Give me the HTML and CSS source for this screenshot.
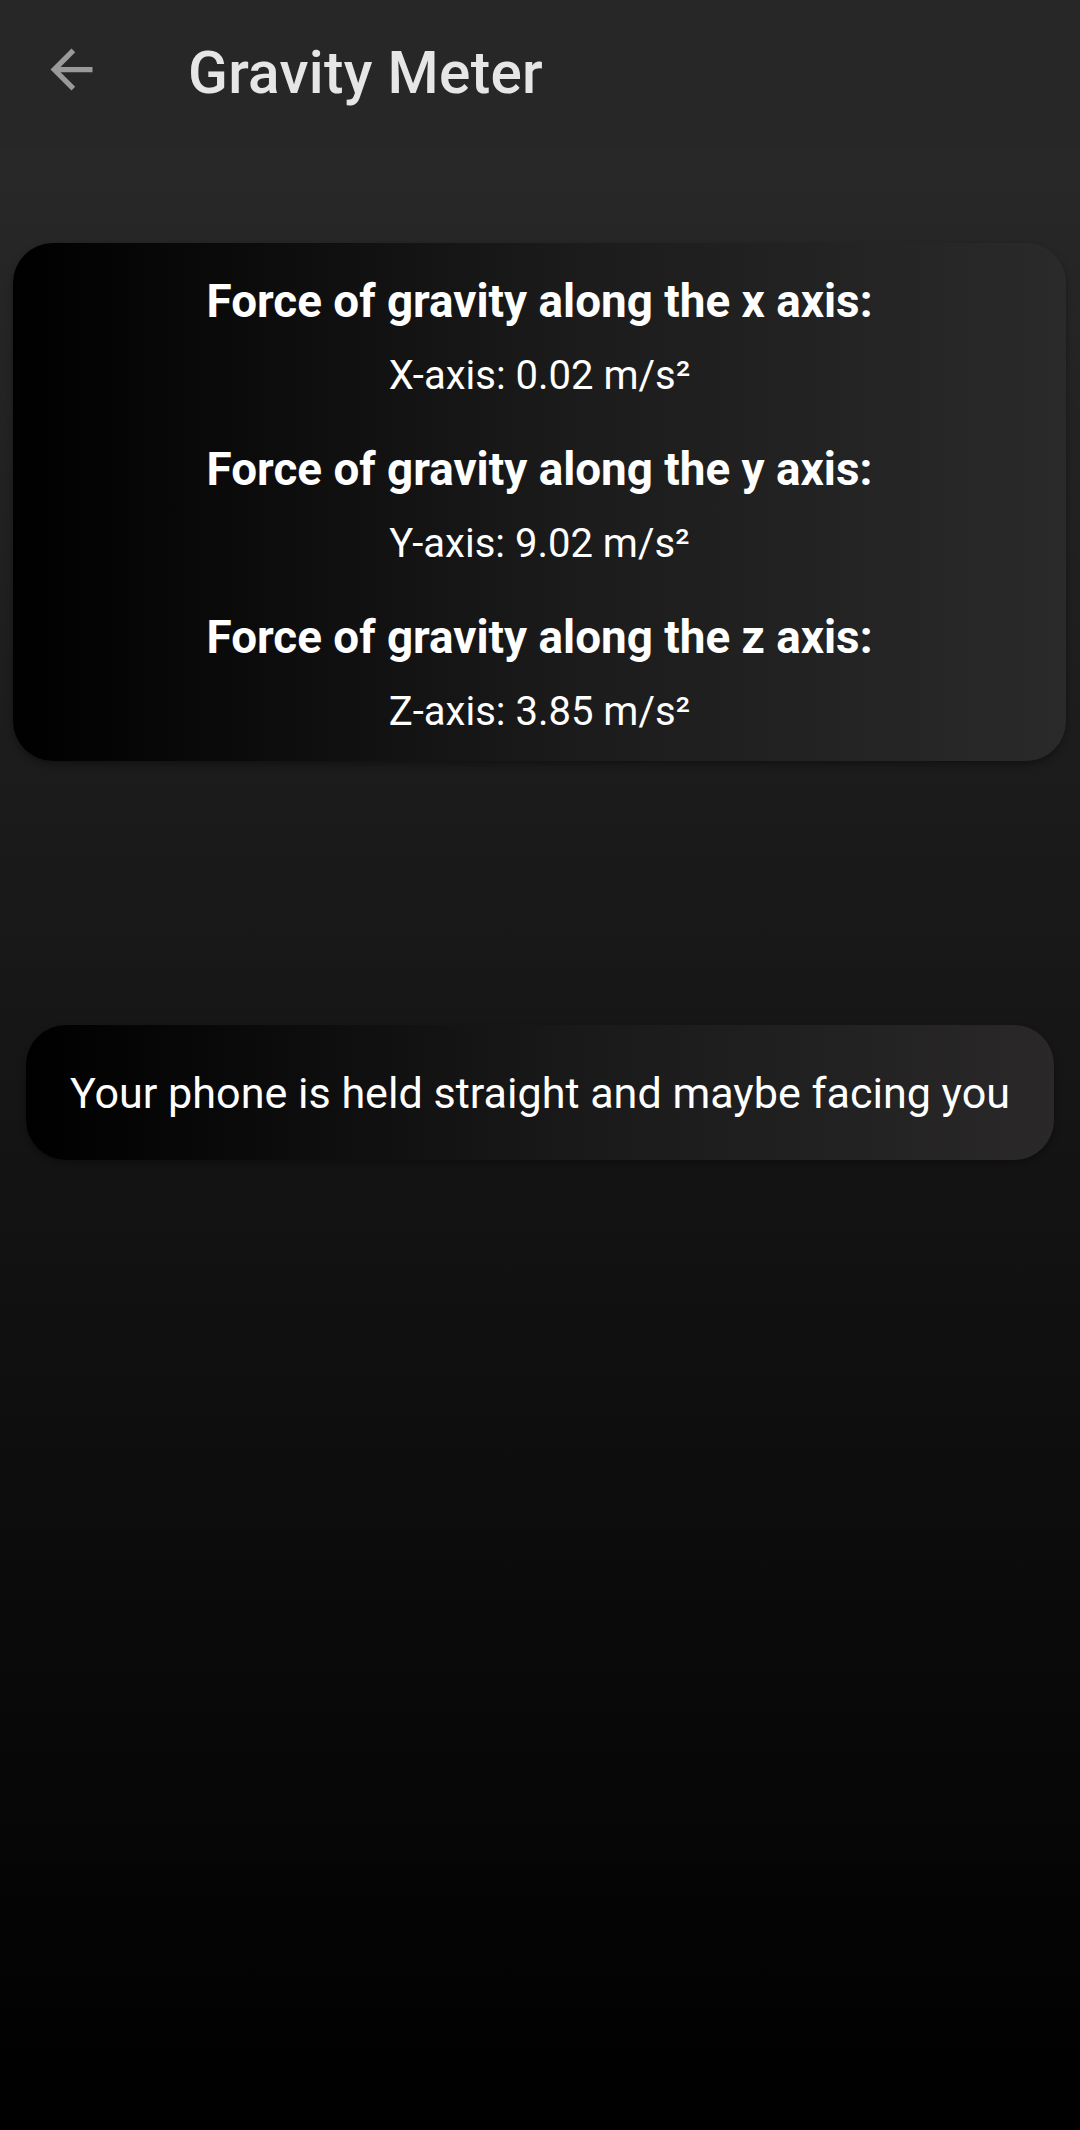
FILE: index.html
```html
<!DOCTYPE html>
<html>
<head>
<meta charset="utf-8">
<link rel="stylesheet" href="styles.css">
</head>
<body>
<div class="screen">
  <header class="appbar">
    <svg class="back" viewBox="0 0 24 24" width="63" height="63"><path d="M20 11H7.83l5.59-5.59L12 4l-8 8 8 8 1.41-1.41L7.83 13H20v-2z" fill="#9a9a9a"/></svg>
    <h1 class="title">Gravity Meter</h1>
  </header>
  <section class="card">
    <div class="row">
      <div class="label">Force of gravity along the x axis:</div>
      <div class="value">X-axis: 0.02 m/s²</div>
    </div>
    <div class="row">
      <div class="label">Force of gravity along the y axis:</div>
      <div class="value">Y-axis: 9.02 m/s²</div>
    </div>
    <div class="row">
      <div class="label">Force of gravity along the z axis:</div>
      <div class="value">Z-axis: 3.85 m/s²</div>
    </div>
  </section>
  <div class="status">Your phone is held straight and maybe facing you</div>
</div>
</body>
</html>
```
FILE: styles.css
```css
html, body {
  margin: 0;
  padding: 0;
}
body {
  width: 1080px;
  height: 2130px;
  background: linear-gradient(180deg, #2b2b2b 0%, #000 100%);
  font-family: Roboto, "Noto Sans", sans-serif;
  overflow: hidden;
}
.screen {
  display: flex;
  flex-direction: column;
}
.appbar {
  height: 147px;
  background: #272727;
  display: flex;
  align-items: flex-start;
  box-sizing: border-box;
}
.back {
  display: block;
  margin: 38px 0 0 40px;
}
.title {
  margin: 0 0 0 85px;
  padding-top: 39px;
  font-size: 58.5px;
  font-weight: 500;
  line-height: 68px;
  color: #e6e6e6;
  letter-spacing: 0.3px;
}
.card {
  margin: 96px 14px 0 13px;
  padding: 31px 0 28px;
  border-radius: 40px;
  background: linear-gradient(90deg, #000 0%, #1c1c1c 55%, #2b2a2b 100%);
  box-shadow: 0 3px 6px rgba(0, 0, 0, 0.35);
  display: flex;
  flex-direction: column;
  gap: 45px;
  text-align: center;
}
.row {
  display: flex;
  flex-direction: column;
  gap: 25px;
}
.label {
  font-size: 45.8px;
  font-weight: 700;
  line-height: 55px;
  color: #fff;
}
.value {
  font-size: 40px;
  font-weight: 400;
  line-height: 43px;
  color: #fff;
}
.status {
  margin: 264px 26px 0 26px;
  height: 135px;
  border-radius: 40px;
  background: linear-gradient(90deg, #000 0%, #1a1a1a 55%, #2a2829 100%);
  box-shadow: 0 3px 6px rgba(0, 0, 0, 0.3);
  display: flex;
  align-items: center;
  justify-content: center;
  font-size: 43.1px;
  line-height: 52px;
  color: #fff;
  padding-top: 2px;
  box-sizing: border-box;
}
```
